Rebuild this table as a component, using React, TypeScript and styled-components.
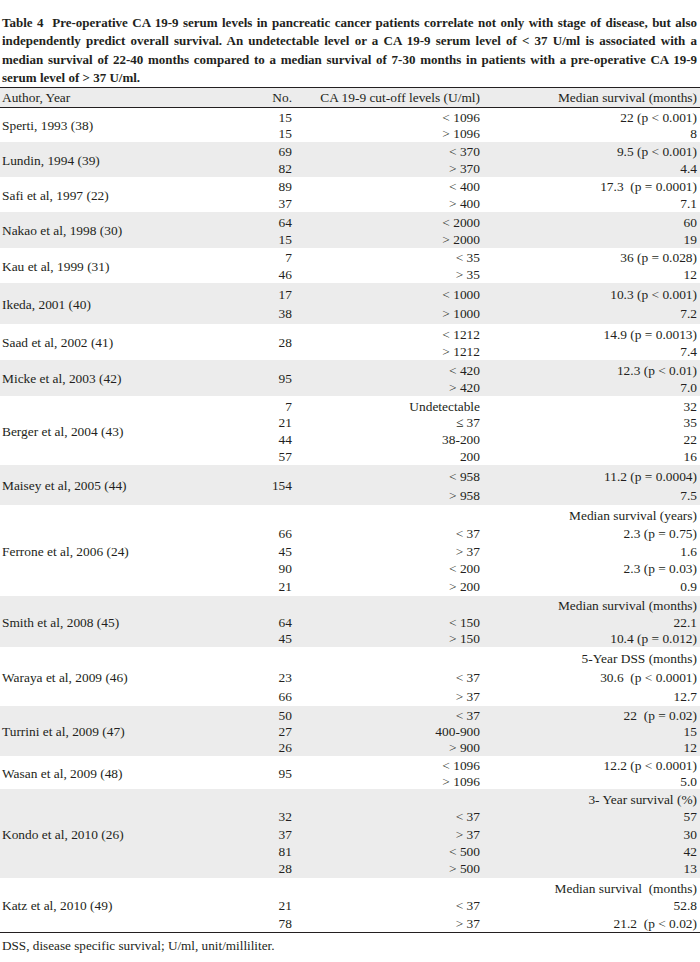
import React from "react";
import styled, { createGlobalStyle } from "styled-components";

const GlobalStyle = createGlobalStyle`
	html, body {
		margin: 0;
		padding: 0;
		background: #ffffff;
	}
	body {
		font-family: "Liberation Serif", "Times New Roman", serif;
		color: #231f20;
	}
`;

interface Line {
	no?: string;
	cut?: string;
	surv?: string;
}

interface Group {
	author: string;
	height: number;
	no?: string;
	lines: Line[];
}

const groups: Group[] = [
	{
		author: "Sperti, 1993 (38)",
		height: 34,
		lines: [
			{ no: "15", cut: "< 1096", surv: "22 (p < 0.001)" },
			{ no: "15", cut: "> 1096", surv: "8" },
		],
	},
	{
		author: "Lundin, 1994 (39)",
		height: 35,
		lines: [
			{ no: "69", cut: "< 370", surv: "9.5 (p < 0.001)" },
			{ no: "82", cut: "> 370", surv: "4.4" },
		],
	},
	{
		author: "Safi et al, 1997 (22)",
		height: 35,
		lines: [
			{ no: "89", cut: "< 400", surv: "17.3  (p = 0.0001)" },
			{ no: "37", cut: "> 400", surv: "7.1" },
		],
	},
	{
		author: "Nakao et al, 1998 (30)",
		height: 36,
		lines: [
			{ no: "64", cut: "< 2000", surv: "60" },
			{ no: "15", cut: "> 2000", surv: "19" },
		],
	},
	{
		author: "Kau et al, 1999 (31)",
		height: 35,
		lines: [
			{ no: "7", cut: "< 35", surv: "36 (p = 0.028)" },
			{ no: "46", cut: "> 35", surv: "12" },
		],
	},
	{
		author: "Ikeda, 2001 (40)",
		height: 41,
		lines: [
			{ no: "17", cut: "< 1000", surv: "10.3 (p < 0.001)" },
			{ no: "38", cut: "> 1000", surv: "7.2" },
		],
	},
	{
		author: "Saad et al, 2002 (41)",
		height: 36,
		no: "28",
		lines: [
			{ cut: "< 1212", surv: "14.9 (p = 0.0013)" },
			{ cut: "> 1212", surv: "7.4" },
		],
	},
	{
		author: "Micke et al, 2003 (42)",
		height: 36,
		no: "95",
		lines: [
			{ cut: "< 420", surv: "12.3 (p < 0.01)" },
			{ cut: "> 420", surv: "7.0" },
		],
	},
	{
		author: "Berger et al, 2004 (43)",
		height: 69,
		lines: [
			{ no: "7", cut: "Undetectable", surv: "32" },
			{ no: "21", cut: "≤ 37", surv: "35" },
			{ no: "44", cut: "38-200", surv: "22" },
			{ no: "57", cut: "200", surv: "16" },
		],
	},
	{
		author: "Maisey et al, 2005 (44)",
		height: 40,
		no: "154",
		lines: [
			{ cut: "< 958", surv: "11.2 (p = 0.0004)" },
			{ cut: "> 958", surv: "7.5" },
		],
	},
	{
		author: "Ferrone et al, 2006 (24)",
		height: 91,
		lines: [
			{ surv: "Median survival (years)" },
			{ no: "66", cut: "< 37", surv: "2.3 (p = 0.75)" },
			{ no: "45", cut: "> 37", surv: "1.6" },
			{ no: "90", cut: "< 200", surv: "2.3 (p = 0.03)" },
			{ no: "21", cut: "> 200", surv: "0.9" },
		],
	},
	{
		author: "Smith et al, 2008 (45)",
		height: 51,
		lines: [
			{ surv: "Median survival (months)" },
			{ no: "64", cut: "< 150", surv: "22.1" },
			{ no: "45", cut: "> 150", surv: "10.4 (p = 0.012)" },
		],
	},
	{
		author: "Waraya et al, 2009 (46)",
		height: 59,
		lines: [
			{ surv: "5-Year DSS (months)" },
			{ no: "23", cut: "< 37", surv: "30.6  (p < 0.0001)" },
			{ no: "66", cut: "> 37", surv: "12.7" },
		],
	},
	{
		author: "Turrini et al, 2009 (47)",
		height: 50,
		lines: [
			{ no: "50", cut: "< 37", surv: "22  (p = 0.02)" },
			{ no: "27", cut: "400-900", surv: "15" },
			{ no: "26", cut: "> 900", surv: "12" },
		],
	},
	{
		author: "Wasan et al, 2009 (48)",
		height: 33,
		no: "95",
		lines: [
			{ cut: "< 1096", surv: "12.2 (p < 0.0001)" },
			{ cut: "> 1096", surv: "5.0" },
		],
	},
	{
		author: "Kondo et al, 2010 (26)",
		height: 89,
		lines: [
			{ surv: "3- Year survival (%)" },
			{ no: "32", cut: "< 37", surv: "57" },
			{ no: "37", cut: "> 37", surv: "30" },
			{ no: "81", cut: "< 500", surv: "42" },
			{ no: "28", cut: "> 500", surv: "13" },
		],
	},
	{
		author: "Katz et al, 2010 (49)",
		height: 54,
		lines: [
			{ surv: "Median survival  (months)" },
			{ no: "21", cut: "< 37", surv: "52.8" },
			{ no: "78", cut: "> 37", surv: "21.2  (p < 0.02)" },
		],
	},
];

const Page = styled.div`
	width: 700px;
	padding-top: 14px;
`;

const Caption = styled.div`
	padding: 0 3px 0 2px;
	font-weight: bold;
	font-size: 13px;
	line-height: 18.3px;
`;

const CaptionLine = styled.div<{ $justify?: boolean }>`
	white-space: pre-wrap;
	text-align: left;
	text-align-last: ${(p) => (p.$justify ? "justify" : "left")};
`;

const Table = styled.div`
	border-top: 1.5px solid #231f20;
	border-bottom: 1.5px solid #231f20;
	font-size: 13.4px;
`;

const columns = `grid-template-columns: 230px 62px 188px 1fr;`;

const HeaderRow = styled.div`
	display: grid;
	${columns}
	align-items: center;
	height: 19px;
	background: #ececec;
	border-bottom: 1px solid #231f20;
	line-height: 19px;
`;

const GroupBlock = styled.div<{ $shaded: boolean; $rows: number }>`
	display: grid;
	${columns}
	grid-template-rows: repeat(${(p) => p.$rows}, 1fr);
	box-sizing: border-box;
	padding-top: 2px;
	background: ${(p) => (p.$shaded ? "#ececec" : "#ffffff")};
	line-height: 16px;
`;

const Cell = styled.div<{ $align?: "left" | "right"; $span?: boolean }>`
	text-align: ${(p) => p.$align ?? "right"};
	white-space: pre;
	align-self: center;
	${(p) => (p.$span ? "grid-row: 1 / -1;" : "")}
`;

const AuthorCell = styled(Cell)`
	padding-left: 2px;
	grid-column: 1;
`;

const NoCell = styled(Cell)`
	grid-column: 2;
`;

const CutCell = styled(Cell)`
	grid-column: 3;
`;

const SurvCell = styled(Cell)`
	grid-column: 4;
	padding-right: 3px;
`;

const Footnote = styled.div`
	font-size: 13.2px;
	padding: 4px 2px 0;
	line-height: 17px;
`;

const captionLines = [
	"Table 4  Pre-operative CA 19-9 serum levels in pancreatic cancer patients correlate not only with stage of disease, but also",
	"independently predict overall survival. An undetectable level or a CA 19-9 serum level of < 37 U/ml is associated with a",
	"median survival of 22-40 months compared to a median survival of 7-30 months in patients with a pre-operative CA 19-9",
	"serum level of > 37 U/ml.",
];

export default function App() {
	return (
		<>
			<GlobalStyle />
			<Page>
				<Caption>
					{captionLines.map((line, i) => (
						<CaptionLine key={i} $justify={i < captionLines.length - 1}>
							{line}
						</CaptionLine>
					))}
				</Caption>
				<Table>
					<HeaderRow>
						<AuthorCell $align="left">Author, Year</AuthorCell>
						<NoCell>No.</NoCell>
						<CutCell>CA 19-9 cut-off levels (U/ml)</CutCell>
						<SurvCell>Median survival (months)</SurvCell>
					</HeaderRow>
					{groups.map((g, gi) => (
						<GroupBlock
							key={g.author}
							$shaded={gi % 2 === 1}
							$rows={g.lines.length}
							style={{ height: g.height }}
						>
							<AuthorCell $align="left" $span>
								{g.author}
							</AuthorCell>
							{g.no && <NoCell $span>{g.no}</NoCell>}
							{g.lines.map((l, li) => (
								<React.Fragment key={li}>
									{!g.no && l.no && <NoCell style={{ gridRow: li + 1 }}>{l.no}</NoCell>}
									{l.cut && <CutCell style={{ gridRow: li + 1 }}>{l.cut}</CutCell>}
									{l.surv && <SurvCell style={{ gridRow: li + 1 }}>{l.surv}</SurvCell>}
								</React.Fragment>
							))}
						</GroupBlock>
					))}
				</Table>
				<Footnote>DSS, disease specific survival; U/ml, unit/milliliter.</Footnote>
			</Page>
		</>
	);
}
